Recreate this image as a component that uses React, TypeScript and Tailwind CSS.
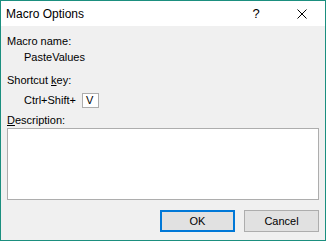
export default function App() {
  const font = { fontFamily: "'Liberation Sans', Arial, sans-serif" };
  return (
    <div
      className="flex h-[241px] w-[326px] flex-col border border-[#1b8f7f] bg-white text-[11px] leading-[16px] text-black"
      style={font}
    >
      {/* Title bar */}
      <div className="flex h-[25px] items-center bg-white">
        <span className="flex-1 pl-[5px] text-[12px]">Macro Options</span>
        <span className="flex w-[46px] items-center justify-center text-[13px] font-light">?</span>
        <span className="flex w-[46px] items-center justify-center">
          <svg width="10" height="10" viewBox="0 0 10 10">
            <path d="M0.5 0.5L9.5 9.5M9.5 0.5L0.5 9.5" stroke="#000" strokeWidth="1" />
          </svg>
        </span>
      </div>

      {/* Body */}
      <div className="flex flex-1 flex-col bg-[#f0f0f0] px-[6px] pt-[7px]">
        <div>Macro name:</div>
        <div className="pl-[17px]">PasteValues</div>

        <div className="mt-[7px]">
          Shortcut <u>k</u>ey:
        </div>
        <div className="mt-[4px] flex h-[16px] items-center pl-[17px]">
          <span>Ctrl+Shift+</span>
          <span className="ml-[6px] flex h-[15px] w-[17px] items-center border border-[#adadad] bg-white pl-[3px]">
            V
          </span>
        </div>

        <div className="mt-[4px]">
          <u>D</u>escription:
        </div>
        <div className="h-[72px] border border-[#adadad] bg-white" />

        <div className="mt-[10px] flex justify-end gap-[9px]">
          <button className="h-[22px] w-[75px] border-2 border-[#0078d7] bg-[#e1e1e1] text-[11px]">
            OK
          </button>
          <button className="h-[22px] w-[75px] border border-[#adadad] bg-[#e1e1e1] text-[11px]">
            Cancel
          </button>
        </div>
      </div>
    </div>
  );
}
